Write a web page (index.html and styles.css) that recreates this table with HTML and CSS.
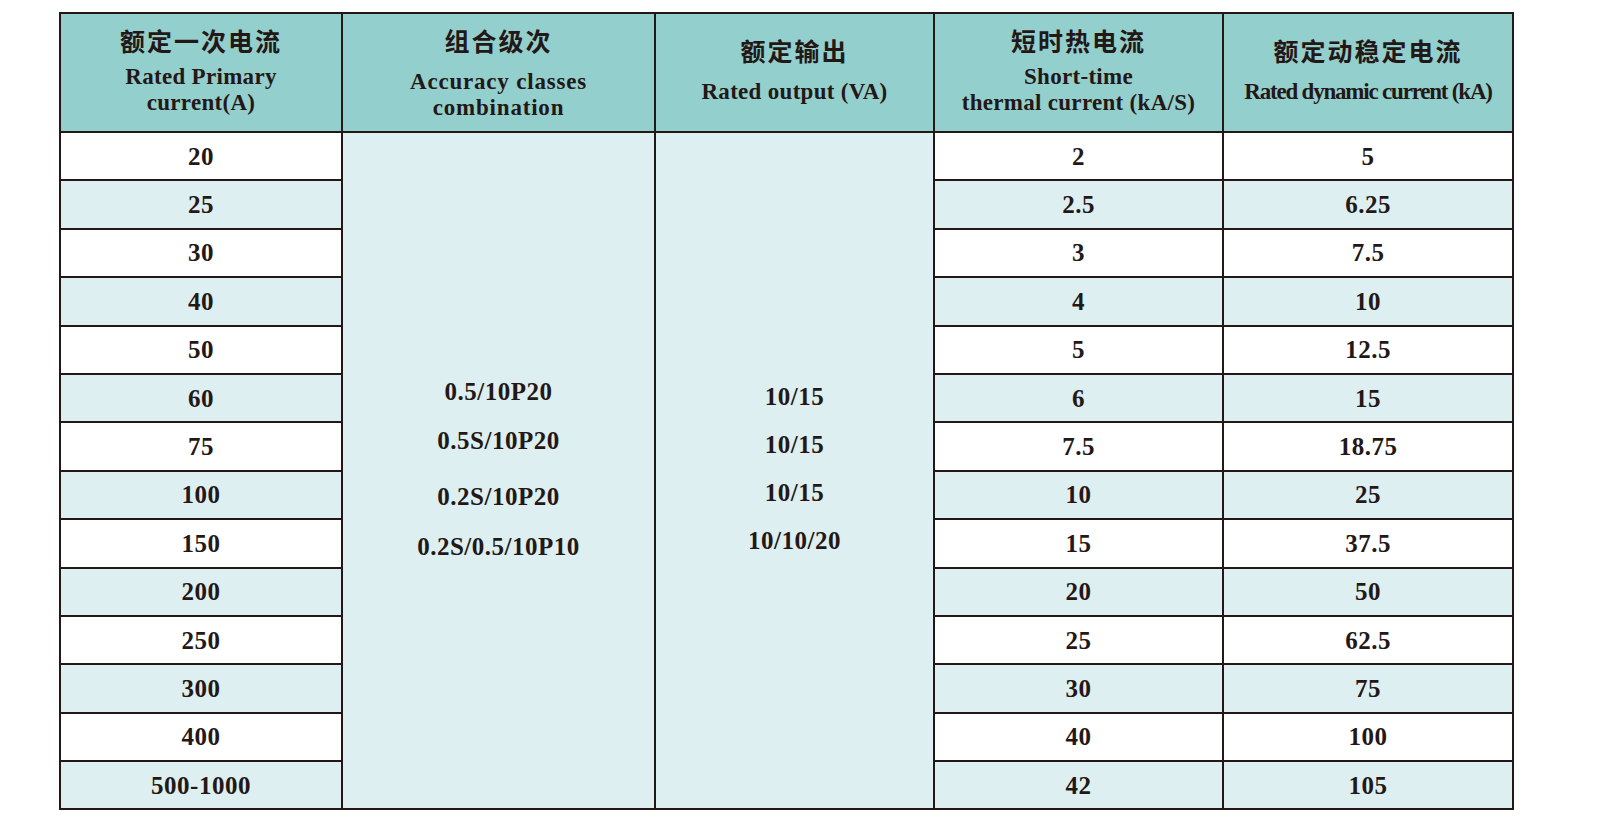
FILE: index.html
```html
<!DOCTYPE html>
<html lang="zh">
<head>
<meta charset="utf-8">
<title>Rated parameters</title>
<link rel="stylesheet" href="styles.css">
</head>
<body>
<table class="spec">
  <colgroup>
    <col class="c1"><col class="c2"><col class="c3"><col class="c4"><col class="c5">
  </colgroup>
  <thead>
    <tr>
      <th class="up"><div class="zh">额定一次电流</div><div class="en gap-s">Rated Primary<br>current(A)</div></th>
      <th><div class="zh">组合级次</div><div class="en wide">Accuracy classes<br>combination</div></th>
      <th class="up"><div class="zh">额定输出</div><div class="en">Rated output (VA)</div></th>
      <th class="up"><div class="zh">短时热电流</div><div class="en gap-s">Short-time<br>thermal current (kA/S)</div></th>
      <th class="up"><div class="zh">额定动稳定电流</div><div class="en narrow">Rated dynamic current (kA)</div></th>
    </tr>
  </thead>
  <tbody>
    <tr class="w"><td>20</td>
      <td class="merged m2" rowspan="14">
        <div class="stack s2"><div>0.5/10P20</div><div>0.5S/10P20</div><div class="drop">0.2S/10P20</div><div class="drop2">0.2S/0.5/10P10</div></div>
      </td>
      <td class="merged m3" rowspan="14">
        <div class="stack s3"><div>10/15</div><div>10/15</div><div>10/15</div><div>10/10/20</div></div>
      </td>
      <td>2</td><td>5</td></tr>
    <tr class="l"><td>25</td><td>2.5</td><td>6.25</td></tr>
    <tr class="w"><td>30</td><td>3</td><td>7.5</td></tr>
    <tr class="l"><td>40</td><td>4</td><td>10</td></tr>
    <tr class="w"><td>50</td><td>5</td><td>12.5</td></tr>
    <tr class="l"><td>60</td><td>6</td><td>15</td></tr>
    <tr class="w"><td>75</td><td>7.5</td><td>18.75</td></tr>
    <tr class="l"><td>100</td><td>10</td><td>25</td></tr>
    <tr class="w"><td>150</td><td>15</td><td>37.5</td></tr>
    <tr class="l"><td>200</td><td>20</td><td>50</td></tr>
    <tr class="w"><td>250</td><td>25</td><td>62.5</td></tr>
    <tr class="l"><td>300</td><td>30</td><td>75</td></tr>
    <tr class="w"><td>400</td><td>40</td><td>100</td></tr>
    <tr class="l"><td>500-1000</td><td>42</td><td>105</td></tr>
  </tbody>
</table>
</body>
</html>
```
FILE: styles.css
```css
html, body {
  margin: 0;
  padding: 0;
  background: #ffffff;
}
body {
  padding: 12px 0 0 59px;
  font-family: "Liberation Serif", "Times New Roman", serif;
  color: #231815;
}
.spec {
  border-collapse: collapse;
  table-layout: fixed;
  width: 1455px;
  border: 2px solid #231815;
}
.c1 { width: 282px; }
.c2 { width: 313px; }
.c3 { width: 279px; }
.c4 { width: 289px; }
.c5 { width: 290px; }
.spec th,
.spec td {
  border: 2px solid #231815;
  padding: 0;
  text-align: center;
  vertical-align: middle;
}
.spec th {
  height: 117px;
  background: #93cfcd;
  font-weight: 700;
}
.spec th.up {
  padding-bottom: 6px;
  height: 111px;
}
.zh {
  font-family: "Noto Sans CJK SC", sans-serif;
  font-weight: 700;
  font-size: 25px;
  line-height: 32px;
  letter-spacing: 2px;
}
.en {
  margin-top: 13px;
  font-size: 23px;
  line-height: 26px;
  letter-spacing: 0.3px;
}
.en.gap-s { margin-top: 8px; }
.en.wide { letter-spacing: 0.8px; margin-top: 13px; }
.en.narrow { letter-spacing: -1.2px; }
.spec td {
  height: 45.4px;
  font-size: 25px;
  font-weight: 700;
  line-height: 26px;
  letter-spacing: 0.5px;
  padding-top: 1px;
}
.spec tr.w td { background: #ffffff; }
.spec tr.l td { background: #deeff2; }
.spec tr td.merged {
  background: #deeff2;
  vertical-align: top;
  padding-top: 0;
}
.stack {
  display: flex;
  flex-direction: column;
  font-size: 25px;
  letter-spacing: 0.5px;
}
.stack div { line-height: 26px; }
.s2 { padding-top: 246px; gap: 23px; }
.s2 .drop { margin-top: 7px; }
.s2 .drop2 { margin-top: 1px; }
.s3 { padding-top: 251px; gap: 22px; }
```
